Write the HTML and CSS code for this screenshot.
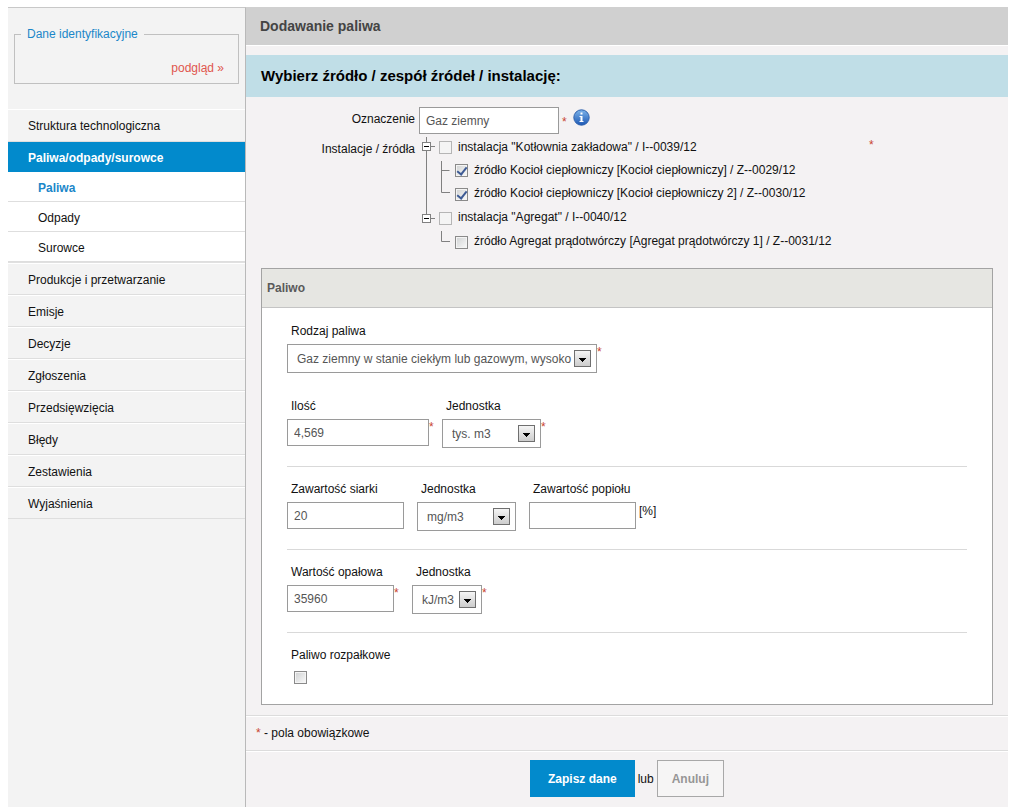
FILE: index.html
```html
<!DOCTYPE html>
<html lang="pl">
<head>
<meta charset="utf-8">
<title>Dodawanie paliwa</title>
<link rel="stylesheet" href="styles.css">
</head>
<body>
<svg class="defs" width="0" height="0" aria-hidden="true">
  <defs>
    <linearGradient id="btn" x1="0" y1="0" x2="0" y2="1"><stop offset="0" stop-color="#f6f6f6"/><stop offset="1" stop-color="#cbcbcb"/></linearGradient>
    <linearGradient id="info" x1="0" y1="0" x2="0" y2="1"><stop offset="0" stop-color="#7db4ea"/><stop offset="1" stop-color="#1d58b4"/></linearGradient>
    <symbol id="arrow" viewBox="0 0 17 17"><rect x=".5" y=".5" width="16" height="16" fill="url(#btn)" stroke="#6f6f6f"/><path d="M5 8h7v1h-1v1h-1v1H9v1H8v-1H7v-1H6V9H5z" fill="#000"/></symbol>
  </defs>
</svg>
<div class="page">
  <aside class="sidebar">
    <fieldset class="ident">
      <legend>Dane identyfikacyjne</legend>
      <a href="#">podgląd »</a>
    </fieldset>
    <nav>
      <ul class="menu">
        <li><a href="#">Struktura technologiczna</a></li>
        <li class="active"><a href="#">Paliwa/odpady/surowce</a>
          <ul class="submenu">
            <li class="current"><a href="#">Paliwa</a></li>
            <li><a href="#">Odpady</a></li>
            <li><a href="#">Surowce</a></li>
          </ul>
        </li>
        <li><a href="#">Produkcje i przetwarzanie</a></li>
        <li><a href="#">Emisje</a></li>
        <li><a href="#">Decyzje</a></li>
        <li><a href="#">Zgłoszenia</a></li>
        <li><a href="#">Przedsięwzięcia</a></li>
        <li><a href="#">Błędy</a></li>
        <li><a href="#">Zestawienia</a></li>
        <li><a href="#">Wyjaśnienia</a></li>
      </ul>
    </nav>
  </aside>
  <main class="main">
    <h1>Dodawanie paliwa</h1>
    <h2>Wybierz źródło / zespół źródeł / instalację:</h2>
    <form>
      <div class="source">
        <label class="side" for="name">Oznaczenie</label>
        <div class="name">
          <input class="text" id="name" type="text" value="Gaz ziemny">
          <span class="req">*</span>
          <svg width="17" height="17" viewBox="0 0 17 17" role="img" aria-label="Informacja"><circle cx="8.5" cy="8.5" r="7.7" fill="url(#info)" stroke="#2f62ad"/><path d="M7.500 3.500h2v2h-2zM6.500 7h3v5h1v1h-4v-1h1V8h-1z" fill="#fff"/></svg>
        </div>
        <span class="side tree-label">Instalacje / źródła</span>
        <div class="tree-area">
          <ul class="tree">
            <li class="node">
              <svg width="16" height="23"><path d="M7.500 1V23M12 10.500h4" stroke="#808080"/><rect x="3.500" y="6.500" width="8" height="8" fill="#fff" stroke="#808080"/><path d="M5 10.500h5" stroke="#000"/></svg>
              <input type="checkbox" id="i39" disabled><label for="i39">instalacja "Kotłownia zakładowa" / I--0039/12</label>
            </li>
            <li class="node">
              <svg width="32" height="23"><path d="M7.500 0V23M22.500 2V23M22.500 11.500h8" stroke="#808080" fill="none"/></svg>
              <input type="checkbox" id="z29" checked><label for="z29">źródło Kocioł ciepłowniczy [Kocioł ciepłowniczy] / Z--0029/12</label>
            </li>
            <li class="node">
              <svg width="32" height="24"><path d="M7.500 0V24M22.500 0V10.500H31" stroke="#808080" fill="none"/></svg>
              <input type="checkbox" id="z30" checked><label for="z30">źródło Kocioł ciepłowniczy [Kocioł ciepłowniczy 2] / Z--0030/12</label>
            </li>
            <li class="node">
              <svg width="16" height="24"><path d="M7.500 0V8M12 12.500h4" stroke="#808080"/><rect x="3.500" y="8.500" width="8" height="8" fill="#fff" stroke="#808080"/><path d="M5 12.500h5" stroke="#000"/></svg>
              <input type="checkbox" id="i40" disabled><label for="i40">instalacja "Agregat" / I--0040/12</label>
            </li>
            <li class="node">
              <svg width="32" height="24"><path d="M22.500 1V11.500H31" stroke="#808080" fill="none"/></svg>
              <input type="checkbox" id="z31"><label for="z31">źródło Agregat prądotwórczy [Agregat prądotwórczy 1] / Z--0031/12</label>
            </li>
          </ul>
          <span class="req">*</span>
        </div>
      </div>

      <section class="panel">
        <h3>Paliwo</h3>
        <div class="panel-body">
          <div class="row spaced">
            <div class="field"><label for="kind">Rodzaj paliwa</label>
              <div class="control"><span class="select w-xl"><select id="kind"><option>Gaz ziemny w stanie ciekłym lub gazowym, wysoko</option></select><svg width="17" height="17"><use href="#arrow"/></svg></span><span class="req">*</span></div></div>
          </div>
          <div class="row">
            <div class="field"><label for="qty">Ilość</label>
              <div class="control"><input class="text w-l" id="qty" type="text" value="4,569"><span class="req">*</span></div></div>
            <div class="field"><label for="qtyu">Jednostka</label>
              <div class="control"><span class="select w-m"><select id="qtyu"><option>tys. m3</option></select><svg width="17" height="17"><use href="#arrow"/></svg></span><span class="req">*</span></div></div>
          </div>
          <div class="row">
            <div class="field"><label for="sul">Zawartość siarki</label>
              <div class="control"><input class="text w-ml" id="sul" type="text" value="20"><span class="req"></span></div></div>
            <div class="field"><label for="sulu">Jednostka</label>
              <div class="control"><span class="select w-m"><select id="sulu"><option>mg/m3</option></select><svg width="17" height="17"><use href="#arrow"/></svg></span><span class="req"></span></div></div>
            <div class="field"><label for="ash">Zawartość popiołu</label>
              <div class="control"><input class="text w-n" id="ash" type="text"><span class="unit">[%]</span></div></div>
          </div>
          <div class="row wide">
            <div class="field"><label for="cal">Wartość opałowa</label>
              <div class="control"><input class="text w-n" id="cal" type="text" value="35960"><span class="req">*</span></div></div>
            <div class="field"><label for="calu">Jednostka</label>
              <div class="control"><span class="select w-s"><select id="calu"><option>kJ/m3</option></select><svg width="17" height="17"><use href="#arrow"/></svg></span><span class="req">*</span></div></div>
          </div>
          <div class="row last">
            <div class="field"><label for="start">Paliwo rozpałkowe</label>
              <div class="control check"><input type="checkbox" id="start"></div></div>
          </div>
        </div>
      </section>

      <p class="note"><span class="req">*</span> - pola obowiązkowe</p>
      <div class="actions">
        <button class="save" type="submit">Zapisz dane</button>
        <span>lub</span>
        <button class="cancel" type="button">Anuluj</button>
      </div>
    </form>
  </main>
</div>
</body>
</html>
```
FILE: styles.css
```css
* { box-sizing: border-box; }
body {
  margin: 0;
  padding: 7px 8px 0;
  background: #fff;
  color: #111;
  font: 12px/16px "Liberation Sans", Arial, sans-serif;
}
.defs { position: absolute; }
ul { list-style: none; margin: 0; padding: 0; }
a { color: inherit; text-decoration: none; }
input, select, button { font: inherit; margin: 0; border-radius: 0; }
h1, h2, h3, p { margin: 0; }

.page {
  display: grid;
  grid-template-columns: 238px 1fr;
  min-height: calc(100vh - 7px);
  background: #f4f2f3;
}

/* Sidebar */
.sidebar {
  background: #f3f3f3;
  border-top: 1px solid #c8c8c8;
  border-right: 1px solid #b9b9b9;
}
.ident {
  margin: 18px 6px 25px;
  padding: 18px 14px 7px 6px;
  border: 1px solid #c0c0c0;
  text-align: right;
}
.ident legend { padding: 0 6px; color: #1b87c9; text-align: left; }
.ident a { color: #e0564e; }
.menu > li > a {
  display: block;
  padding: 8px 20px 6px;
  border-top: 1px solid #fff;
  border-bottom: 1px solid #dedede;
}
.menu > li:first-child > a { padding-bottom: 7px; }
.menu > .active > a {
  padding: 8px 20px 6px;
  border: 0;
  background: #028acc;
  color: #fff;
  font-weight: bold;
}
.submenu { background: #fff; border-bottom: 1px solid #e0e0e0; }
.submenu a { display: block; padding: 8px 30px 5px; border-bottom: 1px solid #dedede; }
.submenu .current { color: #1b87c9; font-weight: bold; }

/* Headings */
h1 {
  padding: 11px 14px 10px;
  border-bottom: 1px solid #fff;
  background: #d0d0d0;
  color: #444;
  font-size: 14px;
  line-height: 17px;
}
h2 {
  margin-top: 9px;
  padding: 12px 15px;
  background: #c0dee7;
  color: #000;
  font-size: 15px;
  line-height: 18px;
}

/* Fields */
.text, select {
  height: 27px;
  padding: 0 6px;
  border: 1px solid #9a9a9a;
  background: #fff;
  color: #555;
}
.req { width: 5px; color: #c9452f; }
.select { display: grid; align-items: center; }
.select > * { grid-area: 1 / 1; }
.select svg { justify-self: end; margin-right: 6px; pointer-events: none; }
select { appearance: none; width: 100%; height: 29px; padding: 0 23px 0 9px; }
.w-xl { width: 310px; }
.w-l { width: 142px; }
.w-ml { width: 117px; }
.w-n { width: 107px; }
.w-m { width: 99px; }
.w-s { width: 70px; }

input[type="checkbox"] {
  appearance: none;
  display: grid;
  place-items: center;
  flex: none;
  width: 13px;
  height: 13px;
  border: 1px solid #8a8a8a;
  background: linear-gradient(135deg, #cfd1d2, #fafafa);
  box-shadow: inset 0 0 0 1px #f4f4f4;
}
input[type="checkbox"]:disabled { border-color: #b5b5b5; background: #f4f4f4; }
input[type="checkbox"]:checked::before {
  content: "";
  width: 4px;
  height: 8px;
  margin-bottom: 2px;
  border: solid #3d5a94;
  border-width: 0 2px 2px 0;
  transform: rotate(38deg);
}

/* Source selection */
.source {
  display: grid;
  grid-template-columns: 169px 1fr;
  column-gap: 4px;
  padding-top: 10px;
}
.side { padding-top: 4px; text-align: right; }
.name { display: flex; }
.name .text { width: 140px; }
.name .req { margin: 7px 6px 0 3px; }
.name svg { margin-top: 2px; }
.tree-area { display: flex; padding-top: 2px; }
.tree { width: 450px; }
.node { display: flex; align-items: center; }
.node input { margin-left: 4px; }
.node label { margin: 0 0 2px 6px; }
.tree-area .req { padding-top: 1px; }
.tree-label { padding-top: 7px; }

/* Fuel panel */
.panel { margin: 14px 15px 10px; border: 1px solid #a3a3a3; background: #fff; }
h3 {
  padding: 11px 5px;
  border-bottom: 1px solid #c4c4c4;
  background: #e6e6e2;
  color: #5a5a5a;
  font-size: 12px;
}
.panel-body { padding: 1px 25px 20px; }
.row {
  display: flex;
  gap: 8px;
  padding: 14px 0 18px;
  border-bottom: 1px solid #d9d9d9;
}
.row.spaced { padding-bottom: 11px; border: 0; }
.row.wide { gap: 13px; }
.row.last { padding-bottom: 0; border: 0; }
.field > label { display: block; padding: 0 4px; margin-bottom: 5px; }
.control { display: flex; align-items: flex-start; min-height: 29px; }
.unit { padding: 1px 3px; }
.check { min-height: 0; padding: 3px 7px 0; }

/* Footer */
.note { padding: 9px 10px; border: solid #dcdcdc; border-width: 1px 0; box-shadow: inset 0 1px #fff, 0 1px #fff; }
.actions {
  display: flex;
  justify-content: center;
  align-items: center;
  gap: 3px;
  padding: 9px 0;
}
.actions button { height: 37px; font-weight: bold; }
.save { padding: 0 18px; border: 0; background: #028acc; color: #fff; }
.cancel { padding: 0 14px; border: 1px solid #a8a8a8; background: #f6f5f5; color: #969696; }
```
